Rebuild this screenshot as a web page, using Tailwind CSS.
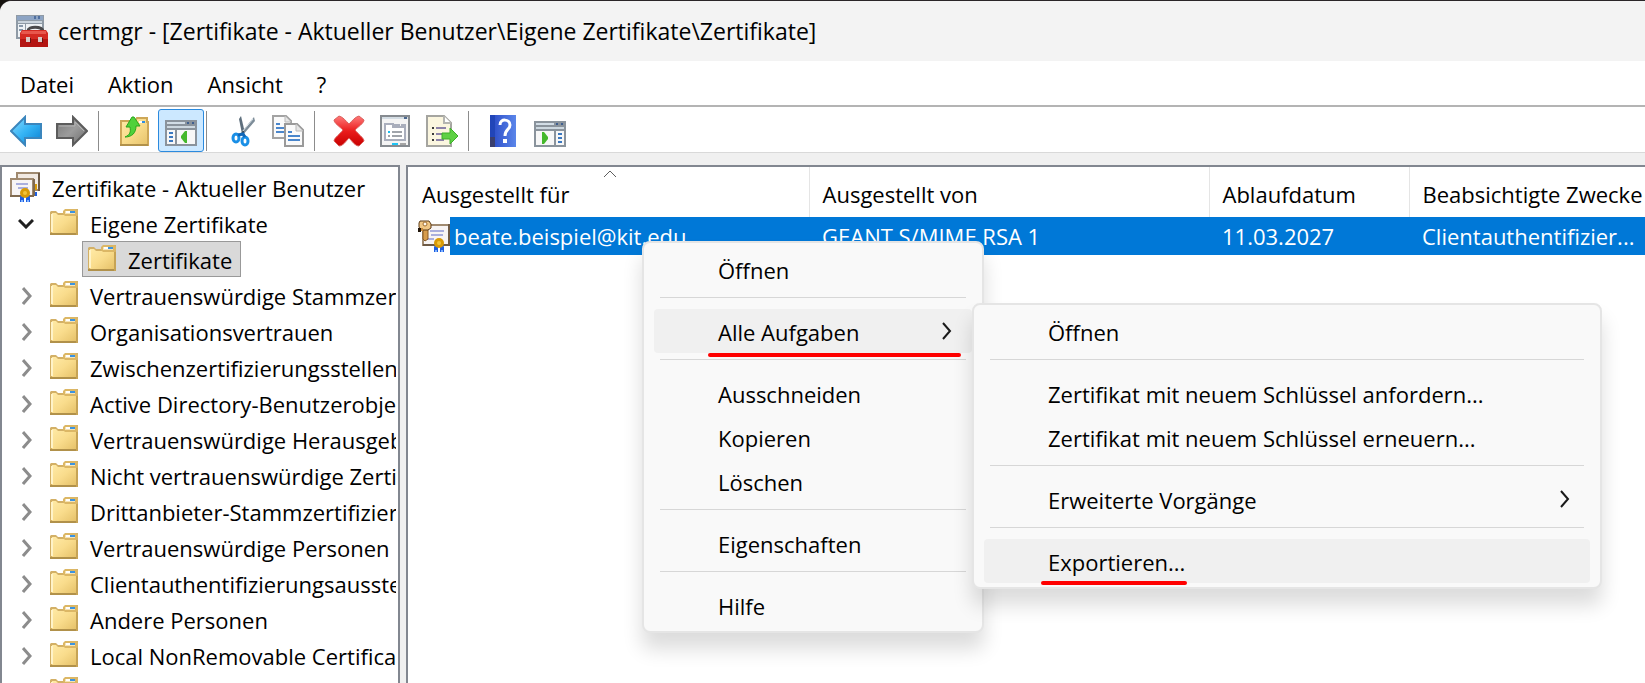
<!DOCTYPE html>
<html lang="de">
<head>
    <meta charset="UTF-8">
    <meta name="viewport" content="width=device-width, initial-scale=1.0">
    <title>certmgr</title>
    <script src="https://cdn.jsdelivr.net/npm/@tailwindcss/browser@4"></script>
</head>
<body class="bg-[#16120f] font-['Open_Sans','Noto_Sans',sans-serif] text-[22px] leading-[30px] text-black">
    <!-- Shared icons -->
    <svg class="absolute w-0 h-0">
        <defs>
            <linearGradient id="folder-fill" x1="0" y1="0" x2="1" y2="1">
                <stop offset="0" stop-color="#ffeaa6" />
                <stop offset="0.5" stop-color="#f9dc8c" />
                <stop offset="1" stop-color="#e6c26a" />
            </linearGradient>
            <linearGradient id="blue-fill" x1="0" y1="0" x2="1" y2="1">
                <stop offset="0" stop-color="#8fdcff" />
                <stop offset="0.5" stop-color="#35b4f5" />
                <stop offset="1" stop-color="#0a7ed0" />
            </linearGradient>
            <linearGradient id="gray-fill" x1="0" y1="0" x2="1" y2="1">
                <stop offset="0" stop-color="#777777" />
                <stop offset="0.5" stop-color="#9c9c9c" />
                <stop offset="1" stop-color="#6a6a6a" />
            </linearGradient>
            <linearGradient id="red-fill" x1="0" y1="0" x2="0" y2="1">
                <stop offset="0" stop-color="#ff7a7a" />
                <stop offset="0.5" stop-color="#ea1c1c" />
                <stop offset="1" stop-color="#c80000" />
            </linearGradient>
            <linearGradient id="help-fill" x1="0" y1="0" x2="1" y2="0">
                <stop offset="0" stop-color="#2747c4" />
                <stop offset="1" stop-color="#5b86ea" />
            </linearGradient>
            <symbol id="folder" viewBox="0 0 28 26">
                <path d="M1 2h5l2 2h6V2l2-2h12v26H0V3z" fill="#d3b066" />
                <path d="M2 4h4l2 2h18v18H2z" fill="url(#folder-fill)" />
                <path d="M13 2l2-2h11l2 2v3l-2 2H15l-2-2z" fill="#dcb765" />
                <path d="M15 2h10v3H15z" fill="#f5e3b4" />
                <path d="M16 2h4v2h-4z" fill="#ffffff" />
                <path d="M20 2h5v2h-5z" fill="#3b93e0" />
                <path d="M2 5v18" stroke="#fff3c8" stroke-width="2" />
                <path d="M0 25h28" stroke="#b1914a" stroke-width="2" />
                <path d="M27 7v19" stroke="#c6a355" stroke-width="2" />
            </symbol>
            <symbol id="ribbon" viewBox="0 0 12 14">
                <path d="M2 7h3v7H1V9z" fill="#1d5fe0" />
                <path d="M7 7h3l1 2v5H7z" fill="#1d5fe0" />
                <path d="M2 12h2v2H2zM8 12h2v2H8z" fill="#7fb2ff" />
                <circle cx="6" cy="5" r="5" fill="#d89a08" />
                <circle cx="6" cy="5" r="2" fill="#f1c33a" />
            </symbol>
            <symbol id="chevron-right" viewBox="0 0 10 18">
                <path d="M1 1l7 8-7 8" fill="none" stroke="currentColor" stroke-width="3" />
            </symbol>
            <symbol id="menu-arrow" viewBox="0 0 10 18">
                <path d="M1 1l7 8-7 8" fill="none" stroke="currentColor" stroke-width="2" />
            </symbol>
        </defs>
    </svg>

    <div class="relative h-screen overflow-hidden border-t border-[#2a2528] rounded-tl-xl bg-[#f0f0f0] flex flex-col">
        <!-- Title Bar -->
        <header class="h-[60px] shrink-0 bg-[#f3f3f3] flex items-center gap-[10px] px-4">
            <svg class="w-8 h-8" viewBox="0 0 32 32">
                <path d="M0 0h28v24H0z" fill="#8f9aa5" />
                <path d="M1 1h26v4H1z" fill="#8da4c4" />
                <path d="M18 1h2v3h-2zM22 1h2v3h-2z" fill="#4f6f9f" />
                <path d="M2 6h24v2H2z" fill="#c9d3dc" />
                <path d="M2 9h7v13H2zM10 9h16v13H10z" fill="#eef2f5" />
                <path d="M3 11h4M3 15h4" stroke="#8898aa" stroke-width="2" />
                <path d="M12 16c0-5 14-5 15 0" fill="none" stroke="#4a4a4c" stroke-width="3" />
                <path d="M6 15h24l2 3v14H4V18z" fill="#d42a22" />
                <path d="M4 24h28v8H4z" fill="#b31512" />
                <path d="M6 16h24v3H5z" fill="#e8564c" />
                <path d="M10 22h4v5h-4zM22 22h4v5h-4z" fill="#d9c9c6" />
                <path d="M14 23h1v5h-1zM26 23h1v5h-1z" fill="#6a1210" />
            </svg>
            <h1 class="text-[23px]">certmgr - [Zertifikate - Aktueller Benutzer\Eigene Zertifikate\Zertifikate]</h1>
        </header>

        <!-- Menu Bar -->
        <nav class="h-11 shrink-0 bg-white flex items-center gap-[34px] px-5 pt-[2px]">
            <button type="button">Datei</button>
            <button type="button">Aktion</button>
            <button type="button">Ansicht</button>
            <button type="button">?</button>
        </nav>

        <!-- Toolbar -->
        <div class="h-12 shrink-0 bg-white border-t-2 border-t-[#b4b4b4] border-b border-b-[#d9d9d9] flex items-center px-[10px] pt-[2px]">
            <button type="button" aria-label="Zurück">
                <svg class="w-8 h-8" viewBox="0 0 32 32">
                    <path d="M1 16L15 2v7h16v14H15v7z" fill="url(#blue-fill)" stroke="#3b86bd" stroke-width="2" />
                </svg>
            </button>
            <button type="button" aria-label="Vorwärts" class="ml-[14px]">
                <svg class="w-8 h-8" viewBox="0 0 32 32">
                    <path d="M31 16L17 2v7H1v14h16v7z" fill="url(#gray-fill)" stroke="#5c5c5c" stroke-width="2" />
                    <path d="M3 11h16V7l9 9" fill="none" stroke="#b4b4b4" stroke-width="1" />
                </svg>
            </button>
            <div class="w-px h-10 bg-[#8c8c8c] ml-[10px]"></div>
            <button type="button" aria-label="Eine Ebene nach oben" class="ml-[21px]">
                <svg class="w-8 h-8" viewBox="0 0 32 32">
                    <path d="M1 6h14l2-3h10v4h1v23H1z" fill="url(#folder-fill)" stroke="#cda757" stroke-width="2" />
                    <path d="M0 30h28" stroke="#b1914a" stroke-width="2" />
                    <path d="M19 6h3v2h-3z" fill="#ffffff" />
                    <path d="M22 6h3v2h-3z" fill="#2f8ee0" />
                    <path d="M5 22c5-2 6-5 5-10H6l6-10h2l6 9h-4c0 7-4 11-11 11z" fill="#4fd13a" stroke="#2aa51c" stroke-width="1" />
                </svg>
            </button>
            <button type="button" aria-label="Konsolenstruktur ein-/ausblenden" aria-pressed="true" class="w-[46px] h-[43px] ml-[6px] rounded-[3px] border border-[#2b8ade] bg-[#cce8ff] flex items-center justify-center">
                <svg class="w-8 h-8" viewBox="0 0 32 32">
                    <path d="M0 5h32v26H0z" fill="#8a939c" />
                    <path d="M2 7h18v2H2z" fill="#d2dde6" />
                    <path d="M22 7h2v2h-2zM27 7h2v2h-2z" fill="#3f5f8f" />
                    <path d="M2 11h28v2H2z" fill="#cdd8e0" />
                    <path d="M2 15h8v14H2zM12 15h18v14H12z" fill="#f7f7f7" />
                    <path d="M4 18h4M4 22h4M4 26h4" stroke="#3b78c0" stroke-width="2" />
                    <path d="M22 16v12h-2l-4-5v-2l4-5z" fill="#45b82c" />
                </svg>
            </button>
            <div class="w-px h-10 bg-[#8c8c8c] ml-[2px]"></div>
            <button type="button" aria-label="Ausschneiden" class="ml-5">
                <svg class="w-8 h-8" viewBox="0 0 32 32">
                    <path d="M14 1l4 17-3 1L12 4z" fill="#5d6e7c" />
                    <path d="M27 2l1 4-13 15-2-2z" fill="#7d8c98" />
                    <path d="M26 4L15 17" stroke="#dbe4ea" stroke-width="1" />
                    <circle cx="16" cy="17" r="1" fill="#26323c" />
                    <ellipse cx="9" cy="23" rx="3" ry="4" fill="none" stroke="#1a8fe6" stroke-width="3" />
                    <ellipse cx="18" cy="26" rx="3" ry="4" fill="none" stroke="#1a8fe6" stroke-width="3" />
                    <path d="M11 20l5-1 2 3" fill="none" stroke="#1167b8" stroke-width="3" />
                </svg>
            </button>
            <button type="button" aria-label="Kopieren" class="ml-[13px]">
                <svg class="w-8 h-8" viewBox="0 0 32 32">
                    <path d="M1 1h13l5 5v17H1z" fill="#fafafa" stroke="#a3a3a3" stroke-width="2" />
                    <path d="M13 1v6h6" fill="#e6e6e6" stroke="#b8b8b8" stroke-width="1" />
                    <path d="M4 9h4M4 13h8M4 17h8" stroke="#4a86cc" stroke-width="2" />
                    <path d="M13 9h12l6 6v16H13z" fill="#fafafa" stroke="#9a9a9a" stroke-width="2" />
                    <path d="M24 9v7h7" fill="#e6e6e6" stroke="#b8b8b8" stroke-width="1" />
                    <path d="M16 17h4M16 21h12M16 25h12" stroke="#4a86cc" stroke-width="2" />
                </svg>
            </button>
            <div class="w-px h-10 bg-[#8c8c8c] ml-[10px]"></div>
            <button type="button" aria-label="Löschen" class="ml-[18px]">
                <svg class="w-8 h-8" viewBox="0 0 32 32">
                    <path d="M6 1c4 1 7 5 10 8 3-3 6-7 10-8l5 4c0 3-6 7-9 10 3 4 9 8 9 11l-5 5c-4 0-7-5-10-8-3 3-6 8-10 8l-5-5c0-3 6-7 9-11C7 12 1 8 1 5z" fill="url(#red-fill)" stroke="#d9605c" stroke-width="1" />
                </svg>
            </button>
            <button type="button" aria-label="Eigenschaften" class="ml-[15px]">
                <svg class="w-8 h-8" viewBox="0 0 32 32">
                    <rect x="1" y="1" width="28" height="30" fill="#f4f4f4" stroke="#868b90" stroke-width="2" />
                    <path d="M2 3h26" stroke="#d4dde4" stroke-width="2" />
                    <path d="M24 2h3v2h-3z" fill="#4b678f" />
                    <path d="M5 25V9h8v3h12v13z" fill="#ffffff" stroke="#a9aebc" stroke-width="2" />
                    <path d="M14 9h6v2h-6zM21 9h5v2h-5z" fill="#a9aebc" />
                    <path d="M8 17h2" stroke="#19bdf0" stroke-width="2" />
                    <path d="M8 21h2M12 17h10M12 21h10" stroke="#a0a4aa" stroke-width="2" />
                    <path d="M12 28h6v2h-6z" fill="#1fc4f5" />
                    <path d="M20 28h6v2h-6z" fill="#a5a5a5" />
                </svg>
            </button>
            <button type="button" aria-label="Liste exportieren" class="ml-[14px]">
                <svg class="w-8 h-8" viewBox="0 0 32 32">
                    <path d="M1 1h17l7 7v23H1z" fill="#fbf6df" stroke="#a5a5a0" stroke-width="2" />
                    <path d="M18 1v7h7" fill="#ffffff" stroke="#b5b5b0" stroke-width="2" />
                    <path d="M6 13h2M6 19h2M6 25h2" stroke="#3a3a3a" stroke-width="2" />
                    <path d="M10 13h10M10 19h8M10 25h8" stroke="#8d83a8" stroke-width="2" />
                    <path d="M16 18h8v-5l8 8-8 8v-5h-8z" fill="#5ed044" stroke="#3caf28" stroke-width="1" />
                </svg>
            </button>
            <div class="w-px h-10 bg-[#8c8c8c] ml-[10px]"></div>
            <button type="button" aria-label="Hilfe" class="ml-[21px]">
                <svg class="w-[26px] h-8" viewBox="0 0 26 32">
                    <path d="M0 0h26v32H0z" fill="url(#help-fill)" />
                    <path d="M0 0h5v32H0z" fill="#2145b8" />
                    <path d="M0 22h5v10H0z" fill="#3a3f6e" />
                    <path d="M10 10c0-7 10-6 10 0 0 5-5 4-5 11" fill="none" stroke="#ffffff" stroke-width="3" />
                    <path d="M13 24h4v4h-4z" fill="#ffffff" />
                </svg>
            </button>
            <button type="button" aria-label="Aktionsbereich ein-/ausblenden" class="ml-[18px]">
                <svg class="w-8 h-8" viewBox="0 0 32 32">
                    <path d="M0 6h32v26H0z" fill="#8a939c" />
                    <path d="M2 8h18v2H2z" fill="#d2dde6" />
                    <path d="M22 8h2v2h-2zM27 8h2v2h-2z" fill="#3f5f8f" />
                    <path d="M2 12h28v2H2z" fill="#cdd8e0" />
                    <path d="M2 16h18v14H2zM22 16h8v14h-8z" fill="#f7f7f7" />
                    <path d="M24 19h4M24 23h4M24 27h4" stroke="#3b78c0" stroke-width="2" />
                    <path d="M8 17v12h2l4-5v-2l-4-5z" fill="#45b82c" />
                </svg>
            </button>
        </div>

        <main class="flex-1 min-h-0 flex gap-[6px] pt-3">
            <!-- Console Tree -->
            <aside class="w-[400px] shrink-0 bg-white border-2 border-b-0 border-[#828790] pt-[2px] pl-2 pr-[2px] overflow-hidden">
                <ul class="overflow-hidden whitespace-nowrap">
                    <li class="h-9 flex items-center pt-[2px]">
                        <svg class="w-[30px] h-[30px] mb-[2px] shrink-0" viewBox="0 0 30 30">
                            <path d="M7 1h22v17H7z" fill="#f1e9e2" stroke="#a08a70" stroke-width="2" />
                            <path d="M29 1v18" stroke="#6e5a45" stroke-width="2" />
                            <path d="M24 20h3v4h-3z" fill="#1d5fe0" />
                            <path d="M24 12h3v6h-3z" fill="#d89a08" />
                            <path d="M1 7h22v17H1z" fill="#f7f4f4" stroke="#a08a70" stroke-width="2" />
                            <path d="M24 7v17M0 24h24" stroke="#806a50" stroke-width="2" />
                            <path d="M6 12h12M8 16h10" stroke="#a9aede" stroke-width="2" />
                            <use href="#ribbon" x="9" y="16" width="12" height="14" />
                        </svg>
                        <span class="ml-3">Zertifikate - Aktueller Benutzer</span>
                    </li>
                    <li class="h-9 flex items-center pt-[2px]">
                        <button type="button" aria-label="Zuklappen" class="w-10 pl-2 shrink-0"><svg class="w-4 h-[10px]" viewBox="0 0 16 10"><path d="M1 1l7 7 7-7" fill="none" stroke="#202020" stroke-width="3" /></svg></button>
                        <svg class="w-7 h-[26px] mb-1 mr-3 shrink-0"><use href="#folder" /></svg>
                        <span>Eigene Zertifikate</span>
                    </li>
                    <li class="h-9 flex pl-[72px]">
                        <span class="h-9 flex items-center border border-[#999999] bg-[#d9d9d9] pt-[2px] pl-[5px] pr-2">
                            <svg class="w-7 h-[26px] mb-1 mr-3 shrink-0"><use href="#folder" /></svg>
                            <span>Zertifikate</span>
                        </span>
                    </li>
                    <li class="h-9 flex items-center pt-[2px]">
                        <button type="button" aria-label="Aufklappen" class="w-10 pl-3 shrink-0"><svg class="w-[10px] h-[18px] text-[#8c8c8c]"><use href="#chevron-right" /></svg></button>
                        <svg class="w-7 h-[26px] mb-1 mr-3 shrink-0"><use href="#folder" /></svg>
                        <span>Vertrauenswürdige Stammzertifizierungsstellen</span>
                    </li>
                    <li class="h-9 flex items-center pt-[2px]">
                        <button type="button" aria-label="Aufklappen" class="w-10 pl-3 shrink-0"><svg class="w-[10px] h-[18px] text-[#8c8c8c]"><use href="#chevron-right" /></svg></button>
                        <svg class="w-7 h-[26px] mb-1 mr-3 shrink-0"><use href="#folder" /></svg>
                        <span>Organisationsvertrauen</span>
                    </li>
                    <li class="h-9 flex items-center pt-[2px]">
                        <button type="button" aria-label="Aufklappen" class="w-10 pl-3 shrink-0"><svg class="w-[10px] h-[18px] text-[#8c8c8c]"><use href="#chevron-right" /></svg></button>
                        <svg class="w-7 h-[26px] mb-1 mr-3 shrink-0"><use href="#folder" /></svg>
                        <span>Zwischenzertifizierungsstellen</span>
                    </li>
                    <li class="h-9 flex items-center pt-[2px]">
                        <button type="button" aria-label="Aufklappen" class="w-10 pl-3 shrink-0"><svg class="w-[10px] h-[18px] text-[#8c8c8c]"><use href="#chevron-right" /></svg></button>
                        <svg class="w-7 h-[26px] mb-1 mr-3 shrink-0"><use href="#folder" /></svg>
                        <span>Active Directory-Benutzerobjekt</span>
                    </li>
                    <li class="h-9 flex items-center pt-[2px]">
                        <button type="button" aria-label="Aufklappen" class="w-10 pl-3 shrink-0"><svg class="w-[10px] h-[18px] text-[#8c8c8c]"><use href="#chevron-right" /></svg></button>
                        <svg class="w-7 h-[26px] mb-1 mr-3 shrink-0"><use href="#folder" /></svg>
                        <span>Vertrauenswürdige Herausgeber</span>
                    </li>
                    <li class="h-9 flex items-center pt-[2px]">
                        <button type="button" aria-label="Aufklappen" class="w-10 pl-3 shrink-0"><svg class="w-[10px] h-[18px] text-[#8c8c8c]"><use href="#chevron-right" /></svg></button>
                        <svg class="w-7 h-[26px] mb-1 mr-3 shrink-0"><use href="#folder" /></svg>
                        <span>Nicht vertrauenswürdige Zertifikate</span>
                    </li>
                    <li class="h-9 flex items-center pt-[2px]">
                        <button type="button" aria-label="Aufklappen" class="w-10 pl-3 shrink-0"><svg class="w-[10px] h-[18px] text-[#8c8c8c]"><use href="#chevron-right" /></svg></button>
                        <svg class="w-7 h-[26px] mb-1 mr-3 shrink-0"><use href="#folder" /></svg>
                        <span>Drittanbieter-Stammzertifizierungsstellen</span>
                    </li>
                    <li class="h-9 flex items-center pt-[2px]">
                        <button type="button" aria-label="Aufklappen" class="w-10 pl-3 shrink-0"><svg class="w-[10px] h-[18px] text-[#8c8c8c]"><use href="#chevron-right" /></svg></button>
                        <svg class="w-7 h-[26px] mb-1 mr-3 shrink-0"><use href="#folder" /></svg>
                        <span>Vertrauenswürdige Personen</span>
                    </li>
                    <li class="h-9 flex items-center pt-[2px]">
                        <button type="button" aria-label="Aufklappen" class="w-10 pl-3 shrink-0"><svg class="w-[10px] h-[18px] text-[#8c8c8c]"><use href="#chevron-right" /></svg></button>
                        <svg class="w-7 h-[26px] mb-1 mr-3 shrink-0"><use href="#folder" /></svg>
                        <span>Clientauthentifizierungsaussteller</span>
                    </li>
                    <li class="h-9 flex items-center pt-[2px]">
                        <button type="button" aria-label="Aufklappen" class="w-10 pl-3 shrink-0"><svg class="w-[10px] h-[18px] text-[#8c8c8c]"><use href="#chevron-right" /></svg></button>
                        <svg class="w-7 h-[26px] mb-1 mr-3 shrink-0"><use href="#folder" /></svg>
                        <span>Andere Personen</span>
                    </li>
                    <li class="h-9 flex items-center pt-[2px]">
                        <button type="button" aria-label="Aufklappen" class="w-10 pl-3 shrink-0"><svg class="w-[10px] h-[18px] text-[#8c8c8c]"><use href="#chevron-right" /></svg></button>
                        <svg class="w-7 h-[26px] mb-1 mr-3 shrink-0"><use href="#folder" /></svg>
                        <span>Local NonRemovable Certificates</span>
                    </li>
                    <li class="h-9 flex items-center pt-[2px] pl-10">
                        <svg class="w-7 h-[26px] mb-1 shrink-0"><use href="#folder" /></svg>
                    </li>
                </ul>
            </aside>

            <!-- Certificate List -->
            <section class="flex-1 min-w-0 bg-white border-2 border-b-0 border-r-0 border-[#828790] overflow-hidden">
                <table class="w-full table-fixed whitespace-nowrap text-left">
                    <thead>
                        <tr class="h-[50px]">
                            <th class="relative w-[401px] pl-[14px] pt-1 font-normal border-r border-[#e5e5e5]">
                                <svg class="absolute top-[3px] left-1/2 w-[14px] h-2 -ml-[5px]" viewBox="0 0 14 8"><path d="M1 7l6-6 6 6" fill="none" stroke="#5f5f5f" stroke-width="1" /></svg>
                                Ausgestellt für
                            </th>
                            <th class="w-[400px] pl-[13px] pt-1 font-normal border-r border-[#e5e5e5]">Ausgestellt von</th>
                            <th class="w-[200px] pl-[13px] pt-1 font-normal border-r border-[#e5e5e5]">Ablaufdatum</th>
                            <th class="pl-[13px] pt-1 font-normal">Beabsichtigte Zwecke</th>
                        </tr>
                    </thead>
                    <tbody>
                        <tr class="h-[38px] text-white">
                            <td class="p-0">
                                <div class="flex items-center">
                                    <svg class="w-8 h-8 ml-[10px] shrink-0" viewBox="0 0 32 32">
                                        <path d="M5 5h26v20H5z" fill="#f7f4f4" stroke="#a08a70" stroke-width="2" />
                                        <path d="M31 4v22M5 25h27" stroke="#6e5a45" stroke-width="2" />
                                        <path d="M12 11h14M13 15h12M9 19h7" stroke="#a9aede" stroke-width="2" />
                                        <path d="M5 8h5v11l-3 2-2-2z" fill="#d79c4c" stroke="#8a5a22" stroke-width="1" />
                                        <path d="M2 1h9l2 3v4l-3 2H3L1 7V3z" fill="#f0c684" stroke="#5e3c18" stroke-width="1" />
                                        <path d="M0 8h3v4H0z" fill="#20150a" />
                                        <path d="M3 8h2v3H3z" fill="#c88a3c" />
                                        <circle cx="7" cy="4" r="2" fill="#fffaf0" stroke="#a36d2c" stroke-width="1" />
                                        <use href="#ribbon" x="15" y="18" width="12" height="14" />
                                    </svg>
                                    <span class="flex-1 h-[38px] leading-[38px] pl-1 bg-[#0078d7]">beate.beispiel@kit.edu</span>
                                </div>
                            </td>
                            <td class="p-0 pl-[13px] bg-[#0078d7]">GEANT S/MIME RSA 1</td>
                            <td class="p-0 pl-[13px] bg-[#0078d7]">11.03.2027</td>
                            <td class="p-0 pl-[13px] bg-[#0078d7]">Clientauthentifizier...</td>
                        </tr>
                    </tbody>
                </table>
            </section>
        </main>

        <!-- Context Menu -->
        <div role="menu" class="absolute left-[642px] top-[240px] w-[342px] rounded-lg border-2 border-[#e5e5e5] bg-[#f9f9f9] px-[10px] py-1 flex flex-col shadow-[0_16px_20px_rgba(0,0,0,0.14)]">
            <button type="button" role="menuitem" class="h-11 pt-[2px] pl-16 rounded text-left">Öffnen</button>
            <hr class="mx-[6px] mt-[6px] mb-[11px] border-[#d7d7d7]">
            <button type="button" role="menuitem" class="relative h-11 pt-[2px] pl-16 pr-5 rounded bg-[#f0f0f0] flex items-center justify-between">
                Alle Aufgaben
                <svg class="w-[10px] h-[18px] mb-[2px] text-[#1a1a1a]"><use href="#menu-arrow" /></svg>
                <span class="absolute left-[54px] right-[11px] top-11 h-1 rounded-full bg-[#ff0000]"></span>
            </button>
            <hr class="mx-[6px] mt-[6px] mb-[11px] border-[#d7d7d7]">
            <button type="button" role="menuitem" class="h-11 pt-[2px] pl-16 rounded text-left">Ausschneiden</button>
            <button type="button" role="menuitem" class="h-11 pt-[2px] pl-16 rounded text-left">Kopieren</button>
            <button type="button" role="menuitem" class="h-11 pt-[2px] pl-16 rounded text-left">Löschen</button>
            <hr class="mx-[6px] mt-[6px] mb-[11px] border-[#d7d7d7]">
            <button type="button" role="menuitem" class="h-11 pt-[2px] pl-16 rounded text-left">Eigenschaften</button>
            <hr class="mx-[6px] mt-[6px] mb-[11px] border-[#d7d7d7]">
            <button type="button" role="menuitem" class="h-11 pt-[2px] pl-16 rounded text-left">Hilfe</button>
        </div>

        <!-- Submenu -->
        <div role="menu" class="absolute left-[972px] top-[302px] w-[630px] rounded-lg border-2 border-[#e5e5e5] bg-[#f9f9f9] px-[10px] py-1 flex flex-col shadow-[0_16px_20px_rgba(0,0,0,0.14)]">
            <button type="button" role="menuitem" class="h-11 pt-[2px] pl-16 rounded text-left">Öffnen</button>
            <hr class="mx-[6px] mt-[6px] mb-[11px] border-[#d7d7d7]">
            <button type="button" role="menuitem" class="h-11 pt-[2px] pl-16 rounded text-left">Zertifikat mit neuem Schlüssel anfordern...</button>
            <button type="button" role="menuitem" class="h-11 pt-[2px] pl-16 rounded text-left">Zertifikat mit neuem Schlüssel erneuern...</button>
            <hr class="mx-[6px] mt-[6px] mb-[11px] border-[#d7d7d7]">
            <button type="button" role="menuitem" class="h-11 pt-[2px] pl-16 pr-5 rounded flex items-center justify-between">
                Erweiterte Vorgänge
                <svg class="w-[10px] h-[18px] mb-[2px] text-[#1a1a1a]"><use href="#menu-arrow" /></svg>
            </button>
            <hr class="mx-[6px] mt-[6px] mb-[11px] border-[#d7d7d7]">
            <button type="button" role="menuitem" class="h-11 pt-[2px] pl-16 rounded bg-[#f0f0f0] flex items-center">
                <span class="relative">
                    Exportieren...
                    <span class="absolute -left-[7px] -right-[2px] top-[34px] h-1 rounded-full bg-[#ff0000]"></span>
                </span>
            </button>
        </div>
    </div>
</body>
</html>
